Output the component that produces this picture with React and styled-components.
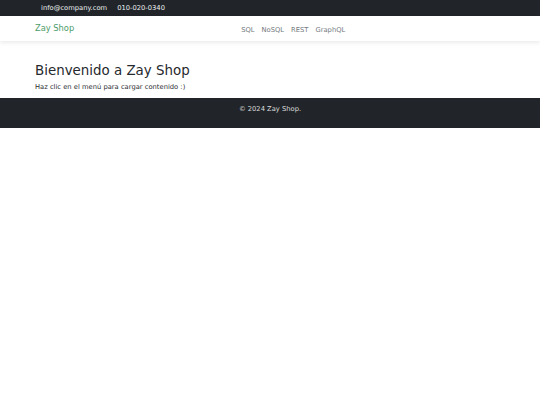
import React from "react";
import styled, { createGlobalStyle } from "styled-components";

const Global = createGlobalStyle`
  html, body { margin: 0; padding: 0; background: #fff; }
  body { font-family: "DejaVu Sans", Verdana, sans-serif; color: #212529; }
`;

const TopBar = styled.div`
  background: #212529;
  height: 16px;
  display: flex;
  align-items: center;
  padding-left: 41px;
  gap: 10px;
  color: #eceff1;
  font-size: 6.75px;
`;

const NavBar = styled.nav`
  height: 25px;
  background: #fff;
  display: flex;
  align-items: center;
  padding: 0 35px;
  box-shadow: 0 2px 4px rgba(0,0,0,0.08);
  position: relative;
`;

const Brand = styled.a`
  color: #4c9c6b;
  font-size: 8.3px;
  text-decoration: none;
  margin-top: -1px;
`;

const Links = styled.ul`
  list-style: none;
  margin: 2px 0 0 167px;
  padding: 0;
  display: flex;
  gap: 7px;
`;

const LinkItem = styled.li`
  font-size: 6.75px;
  color: #747a80;
`;

const Main = styled.main`
  padding: 22px 35px 7px;
`;

const Title = styled.h2`
  margin: 0;
  font-weight: 400;
  font-size: 13.4px;
  line-height: 16px;
  color: #25292d;
`;

const Sub = styled.p`
  margin: 4px 0 0;
  font-size: 6.75px;
  color: #2a2e32;
`;

const Footer = styled.footer`
  background: #212529;
  height: 30px;
  box-sizing: border-box;
  padding-top: 7px;
  display: flex;
  justify-content: center;
  color: #dcdcdc;
  font-size: 6.75px;
`;

export default function App() {
  return (
    <>
      <Global />
      <TopBar>
        <span>info@company.com</span>
        <span>010-020-0340</span>
      </TopBar>
      <NavBar>
        <Brand href="#">Zay Shop</Brand>
        <Links>
          <LinkItem>SQL</LinkItem>
          <LinkItem>NoSQL</LinkItem>
          <LinkItem>REST</LinkItem>
          <LinkItem>GraphQL</LinkItem>
        </Links>
      </NavBar>
      <Main>
        <Title>Bienvenido a Zay Shop</Title>
        <Sub>Haz clic en el menú para cargar contenido :)</Sub>
      </Main>
      <Footer>© 2024 Zay Shop.</Footer>
    </>
  );
}
